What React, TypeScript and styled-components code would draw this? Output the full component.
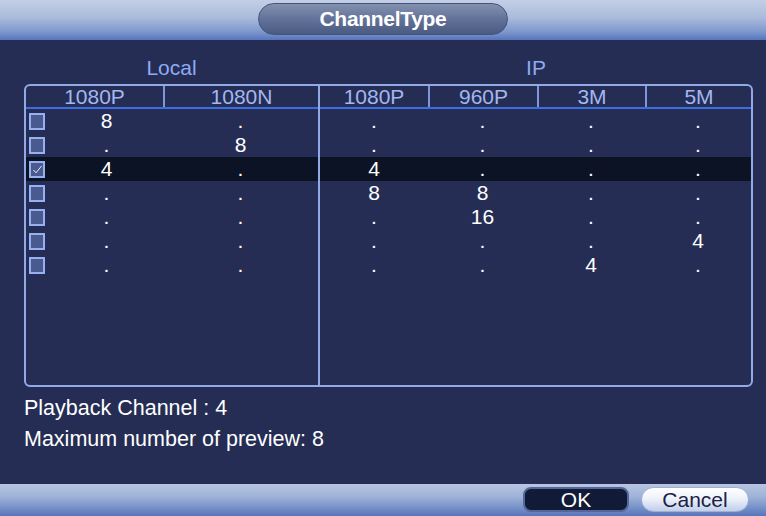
import React from 'react';
import styled, { createGlobalStyle } from 'styled-components';

const GlobalStyle = createGlobalStyle`
  html, body {
    margin: 0;
    padding: 0;
    background: #252d54;
  }
  * {
    box-sizing: border-box;
  }
`;

const Window = styled.div`
  width: 766px;
  height: 516px;
  display: flex;
  flex-direction: column;
  font-family: 'Liberation Sans', Arial, sans-serif;
  background: #252d54;
  overflow: hidden;
`;

const TitleBar = styled.div`
  height: 40px;
  display: flex;
  justify-content: center;
  align-items: flex-start;
  padding-top: 3px;
  background: linear-gradient(to bottom, #c3cfe6 0%, #a9badb 45%, #7d97cc 80%, #5674bd 100%);
`;

const TitlePill = styled.div`
  width: 250px;
  height: 32px;
  border-radius: 16px;
  border: 1px solid #45547c;
  background: linear-gradient(to bottom, #8391ae 0%, #63729a 50%, #4b5a80 100%);
  color: #ffffff;
  font-weight: bold;
  font-size: 21px;
  display: flex;
  align-items: center;
  justify-content: center;
  letter-spacing: -0.3px;
`;

const Body = styled.div`
  flex: 1;
  padding: 0 13px 0 24px;
  display: flex;
  flex-direction: column;
`;

const SectionLabels = styled.div`
  height: 44px;
  display: grid;
  grid-template-columns: 295px 1fr;
  align-items: end;
  padding-bottom: 4px;
`;

const SectionLabel = styled.div`
  text-align: center;
  color: #8fabf2;
  font-size: 21px;
  line-height: 24px;
`;

const Table = styled.div`
  height: 303px;
  border: 2px solid #93a9e6;
  border-radius: 6px;
  display: flex;
  overflow: hidden;
`;

const Panel = styled.div<{ $divider?: boolean }>`
  display: flex;
  flex-direction: column;
  flex: ${(p) => (p.$divider ? '0 0 294px' : '1')};
  border-right: ${(p) => (p.$divider ? '2px solid #93a9e6' : 'none')};
`;

const HeaderRow = styled.div<{ $cols: string }>`
  height: 23px;
  display: grid;
  grid-template-columns: ${(p) => p.$cols};
  border-bottom: 2px solid #3b6ee0;
`;

const HeaderCell = styled.div`
  color: #a3b7f0;
  font-size: 21px;
  line-height: 21px;
  text-align: center;
  & + & {
    border-left: 2px solid #7f96d8;
  }
`;

const Row = styled.div<{ $cols: string; $active?: boolean }>`
  height: 24px;
  display: grid;
  grid-template-columns: ${(p) => p.$cols};
  align-items: center;
  background: ${(p) => (p.$active ? '#0c1325' : 'transparent')};
`;

const Cell = styled.div`
  color: #ffffff;
  font-size: 21px;
  line-height: 24px;
  text-align: center;
`;

const BoxCell = styled.div`
  display: flex;
  align-items: center;
  padding-left: 3px;
`;

const Check = styled.div`
  width: 16px;
  height: 17px;
  border: 2px solid #97b0f2;
  background: #4a5a8e;
  display: flex;
  align-items: center;
  justify-content: center;
`;

const Info = styled.div`
  padding-top: 6px;
  display: flex;
  flex-direction: column;
`;

const InfoLine = styled.div`
  color: #ffffff;
  font-size: 21.5px;
  line-height: 31px;
`;

const Footer = styled.div`
  height: 32px;
  display: flex;
  justify-content: flex-end;
  align-items: center;
  gap: 12px;
  padding: 0 17px 1px 0;
  background: linear-gradient(to bottom, #b7c5e0 0%, #9fb2d8 40%, #7590c8 75%, #5675b9 100%);
`;

const Button = styled.button<{ $light?: boolean }>`
  height: 25px;
  width: ${(p) => (p.$light ? '108px' : '106px')};
  border-radius: ${(p) => (p.$light ? '13px' : '8px')};
  border: ${(p) => (p.$light ? '1px solid #9fb0d4' : '2px solid #56669a')};
  background: ${(p) =>
    p.$light
      ? 'linear-gradient(to bottom, #ffffff 0%, #eef2fb 45%, #c2cfe9 100%)'
      : '#111a36'};
  color: ${(p) => (p.$light ? '#1b2244' : '#ffffff')};
  font-family: 'Liberation Sans', Arial, sans-serif;
  font-size: 21px;
  line-height: 21px;
  padding: 0;
  display: flex;
  align-items: center;
  justify-content: center;
`;

const LOCAL_COLS = '137px 155px';
const LOCAL_ROW_COLS = '24px 113px 155px';
const IP_COLS = '108px 109px 108px 1fr';

type Line = { checked: boolean; local: string[]; ip: string[] };

const lines: Line[] = [
  { checked: false, local: ['8', '.'], ip: ['.', '.', '.', '.'] },
  { checked: false, local: ['.', '8'], ip: ['.', '.', '.', '.'] },
  { checked: true, local: ['4', '.'], ip: ['4', '.', '.', '.'] },
  { checked: false, local: ['.', '.'], ip: ['8', '8', '.', '.'] },
  { checked: false, local: ['.', '.'], ip: ['.', '16', '.', '.'] },
  { checked: false, local: ['.', '.'], ip: ['.', '.', '.', '4'] },
  { checked: false, local: ['.', '.'], ip: ['.', '.', '4', '.'] },
];

const ACTIVE = 2;

const Tick = () => (
  <svg width="11" height="11" viewBox="0 0 11 11">
    <path d="M1.5 6 L4 8.8 L9.5 2" stroke="#e8eeff" strokeWidth="1" fill="none" />
  </svg>
);

export default function App() {
  return (
    <Window>
      <GlobalStyle />
      <TitleBar>
        <TitlePill>ChannelType</TitlePill>
      </TitleBar>
      <Body>
        <SectionLabels>
          <SectionLabel>Local</SectionLabel>
          <SectionLabel>IP</SectionLabel>
        </SectionLabels>
        <Table>
          <Panel $divider>
            <HeaderRow $cols={LOCAL_COLS}>
              <HeaderCell>1080P</HeaderCell>
              <HeaderCell>1080N</HeaderCell>
            </HeaderRow>
            {lines.map((l, i) => (
              <Row key={i} $cols={LOCAL_ROW_COLS} $active={i === ACTIVE}>
                <BoxCell>
                  <Check>{l.checked && <Tick />}</Check>
                </BoxCell>
                {l.local.map((v, j) => (
                  <Cell key={j}>{v}</Cell>
                ))}
              </Row>
            ))}
          </Panel>
          <Panel>
            <HeaderRow $cols={IP_COLS}>
              <HeaderCell>1080P</HeaderCell>
              <HeaderCell>960P</HeaderCell>
              <HeaderCell>3M</HeaderCell>
              <HeaderCell>5M</HeaderCell>
            </HeaderRow>
            {lines.map((l, i) => (
              <Row key={i} $cols={IP_COLS} $active={i === ACTIVE}>
                {l.ip.map((v, j) => (
                  <Cell key={j}>{v}</Cell>
                ))}
              </Row>
            ))}
          </Panel>
        </Table>
        <Info>
          <InfoLine>Playback Channel : 4</InfoLine>
          <InfoLine>Maximum number of preview: 8</InfoLine>
        </Info>
      </Body>
      <Footer>
        <Button>OK</Button>
        <Button $light>Cancel</Button>
      </Footer>
    </Window>
  );
}
